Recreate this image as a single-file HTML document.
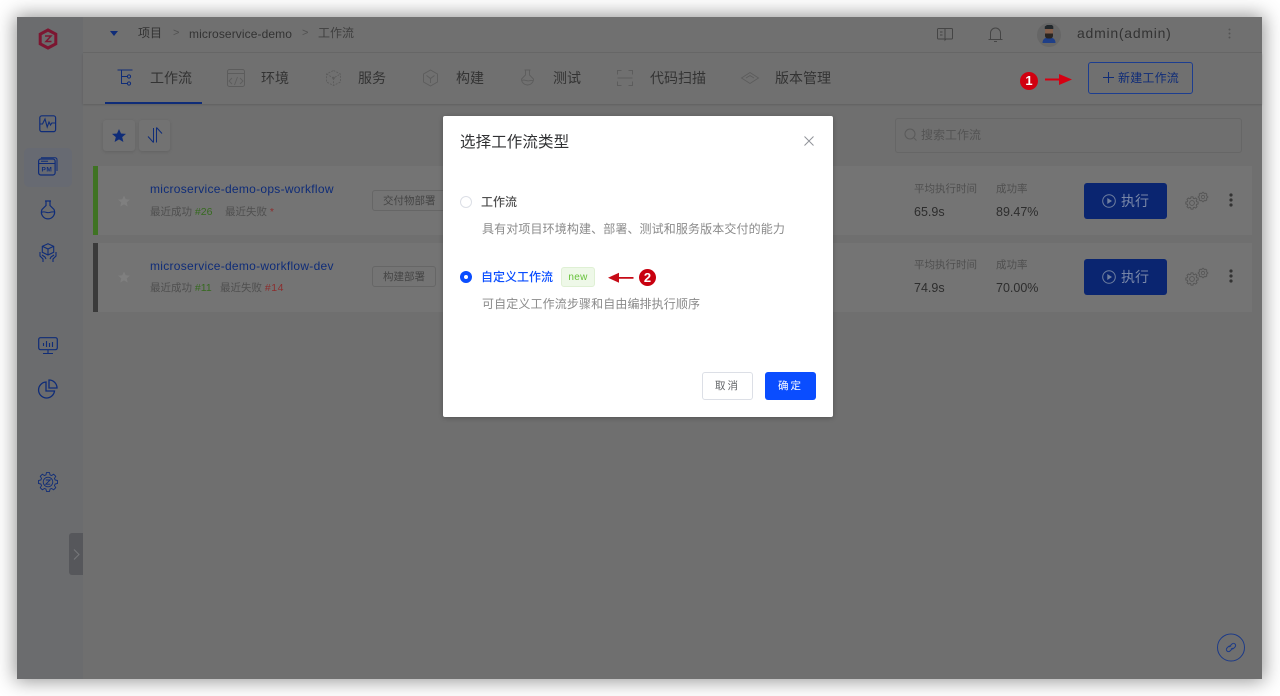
<!DOCTYPE html>
<html lang="zh">
<head>
<meta charset="utf-8">
<style>
html,body{margin:0;padding:0;width:1280px;height:696px;overflow:hidden;background:#fff;font-family:"Liberation Sans","Noto Sans CJK SC",sans-serif;}
#wrap{position:absolute;left:0;top:0;width:1280px;height:696px;filter:blur(.3px);}
.a{position:absolute;white-space:nowrap;line-height:1;}
#win{position:absolute;left:17px;top:17px;width:1245px;height:662px;background:#6f6f6f;box-shadow:0 0 18px 2px rgba(0,0,0,.42);overflow:hidden;}
svg{position:absolute;overflow:visible;fill:none;}
.row{position:absolute;height:69px;background:#747474;}
.bar{position:absolute;width:5px;height:69px;}
.tag{position:absolute;height:21px;border:1px solid #666;border-radius:3px;box-sizing:border-box;background:#747474;color:#454545;font-size:10.500px;line-height:20px;padding-left:10px;}
.run{position:absolute;width:83px;height:36px;background:#0a2570;border-radius:3px;}
</style>
</head>
<body>
<div id="wrap">
<div id="win"></div>
<div class="a" style="left:17px;top:17px;width:66px;height:662px;background:#6b6c6e;"></div>
<div class="a" style="left:83px;top:17px;width:1179px;height:35px;background:#707070;border-bottom:1px solid #686868;"></div>
<div class="a" style="left:83px;top:53px;width:1179px;height:51px;background:#707070;box-shadow:0 1px 2px rgba(0,0,0,.15);"></div>

<!-- sidebar -->
<svg style="left:38px;top:28px" width="20" height="22" viewBox="0 0 20 22"><path d="M10 2 17.800 6.200v9.600L10 20 2.200 15.800V6.200Z" stroke="#7c1631" stroke-width="3"/><path d="M7 8h6l-5 5.500h5.500" stroke="#7c1631" stroke-width="1.500"/></svg>
<svg style="left:39px;top:115px" width="18" height="18" viewBox="0 0 18 18"><rect x=".8" y=".8" width="15.800" height="15.800" rx="2" stroke="#0f2c78" stroke-width="1.200"/><path d="M1 9h2.500L6 4l2.200 8 1.800-5 1.500 3 1.300-2H17" stroke="#0f2c78" stroke-width="1.100"/></svg>
<div class="a" style="left:24px;top:148px;width:48px;height:39px;background:#676a72;border-radius:5px;"></div>
<svg style="left:38px;top:157px" width="20" height="20" viewBox="0 0 20 20"><rect x=".6" y="2" width="16.500" height="16" rx="2.200" stroke="#0f2c78" stroke-width="1.200"/><path d="M3 .7h14a2 2 0 0 1 2 2V14M1 6.500h16M3 4.300h7" stroke="#0f2c78" stroke-width="1"/><text x="3.500" y="14.500" font-size="6.500" font-weight="bold" letter-spacing=".5" fill="#0f2c78" font-family="Liberation Sans">PM</text></svg>
<svg style="left:40px;top:200px" width="16" height="20" viewBox="0 0 16 20"><path d="M5 1h6M6 1v4.500L2 9.500a6.600 6.600 0 1 0 12 0L10 5.500V1" stroke="#0f2c78" stroke-width="1.200"/><path d="M1.500 12.500c3-2 5 1 8 0 2-.6 3-.8 5-.5" stroke="#0f2c78" stroke-width="1"/></svg>
<svg style="left:39px;top:243px" width="18" height="20" viewBox="0 0 18 20"><path d="M9 .7l5.700 2.600v6L9 12 3.300 9.300v-6ZM3.300 3.300 9 6l5.700-2.700M9 6v6" stroke="#0f2c78" stroke-width="1.100"/><path d="M1 9v4l3 3v3M17 9v4l-3 3v3M3 12l3 2 1 2M15 12l-3 2-1 2" stroke="#0f2c78" stroke-width="1.100"/></svg>
<svg style="left:38px;top:337px" width="20" height="18" viewBox="0 0 20 18"><rect x=".7" y=".7" width="18.600" height="12" rx="1.800" stroke="#0f2c78" stroke-width="1.200"/><path d="M10 13v3M5 16.500h10M5.500 9V6M8.500 10V4M11.500 10V6M14.500 10V5" stroke="#0f2c78" stroke-width="1.100"/></svg>
<svg style="left:38px;top:379px" width="20" height="20" viewBox="0 0 20 20"><path d="M8 3a8 8 0 1 0 8.500 9H8Z" stroke="#0f2c78" stroke-width="1.300"/><path d="M11 1a8 8 0 0 1 8 8h-8Z" stroke="#0f2c78" stroke-width="1.300"/></svg>
<svg style="left:38px;top:472px" width="20" height="20" viewBox="0 0 20 20"><path d="M7.960 2.890 8.500.52H11.500L12.040 2.890 13.580 3.530 15.640 2.240 17.760 4.360 16.470 6.420 17.110 7.960 19.480 8.500V11.500L17.110 12.040 16.470 13.580 17.760 15.640 15.640 17.760 13.580 16.470 12.040 17.110 11.500 19.480H8.500L7.960 17.110 6.420 16.470 4.360 17.760 2.240 15.640 3.530 13.580 2.890 12.040.52 11.500V8.500L2.890 7.960 3.530 6.420 2.240 4.360 4.360 2.240 6.420 3.530Z" stroke="#0f2c78" stroke-width=".9"/><circle cx="10" cy="10" r="4.800" stroke="#0f2c78" stroke-width=".9"/><path d="M7.800 8h4.400l-4.400 4.200h4.400" stroke="#0f2c78" stroke-width=".9"/></svg>
<div class="a" style="left:69px;top:533px;width:14px;height:42px;background:#56575b;border-radius:3px 0 0 3px;"></div>
<svg style="left:73px;top:549px" width="7" height="11" viewBox="0 0 7 11"><path d="M1 .5 6 5.500 1 10.500" stroke="#77787b" stroke-width="1"/></svg>

<!-- top bar -->
<svg style="left:110px;top:31px" width="9" height="6" viewBox="0 0 9 6"><path d="M0 0h8L4 5Z" fill="#0f2c78"/></svg>
<div class="a" style="left:138px;top:27px;font-size:12px;color:#333;">项目</div>
<div class="a" style="left:173px;top:28px;font-size:11px;color:#505050;">&gt;</div>
<div class="a" style="left:189px;top:28px;font-size:12px;letter-spacing:.1px;color:#333;">microservice-demo</div>
<div class="a" style="left:302px;top:28px;font-size:11px;color:#505050;">&gt;</div>
<div class="a" style="left:318px;top:27px;font-size:12px;color:#3f3f3f;">工作流</div>
<svg style="left:937px;top:27px" width="16" height="14" viewBox="0 0 16 14"><path d="M8 1.500H1.500a1 1 0 0 0-1 1v8.500a1 1 0 0 0 1 1H8M8 1.500h6.500a1 1 0 0 1 1 1v8.500a1 1 0 0 1-1 1H9l-1 1V1.500ZM3 5h2.500M3 8h2.500" stroke="#454545" stroke-width="1"/></svg>
<svg style="left:988px;top:26px" width="15" height="16" viewBox="0 0 15 16"><path d="M.5 13.500h14M2.500 13.500V7a5 5 0 0 1 10 0v6.500M6 15.500h3" stroke="#454545" stroke-width="1"/></svg>
<div class="a" style="left:1037px;top:23px;width:24px;height:24px;border-radius:50%;background:#666;"></div>
<svg style="left:1041px;top:24px" width="16" height="20" viewBox="0 0 16 20"><path d="M1.500 19c0-4 2.500-5.500 6.500-5.500s6.500 1.500 6.500 5.500Z" fill="#1f3f88"/><rect x="4" y="3" width="8" height="10" rx="3" fill="#84604c"/><path d="M4 9.500h8v2.500a3 3 0 0 1-3 2.500H7a3 3 0 0 1-3-2.500Z" fill="#2a2522"/><path d="M3.800 5V2.500L6 1h5l1.300 1.500V5h-8.500Z" fill="#22282c"/></svg>
<div class="a" style="left:1077px;top:26px;font-size:14px;letter-spacing:.75px;color:#333;">admin(admin)</div>
<svg style="left:1228px;top:28px" width="3" height="11" viewBox="0 0 3 11"><circle cx="1.500" cy="1.500" r="1" fill="#545454"/><circle cx="1.500" cy="5.500" r="1" fill="#545454"/><circle cx="1.500" cy="9.500" r="1" fill="#545454"/></svg>

<!-- tabs -->
<svg style="left:117px;top:69px" width="16" height="17" viewBox="0 0 16 17"><path d="M.5 1h15M4.500 1v14M4.500 7.500h5.500M4.500 14.500h5.500" stroke="#0f2c78" stroke-width="1"/><circle cx="12" cy="7.500" r="1.600" stroke="#0f2c78"/><circle cx="12" cy="14.500" r="1.600" stroke="#0f2c78"/></svg>
<div class="a" style="left:150px;top:71px;font-size:14px;color:#333;">工作流</div>
<div class="a" style="left:105px;top:102px;width:97px;height:2px;background:#0f2c78;"></div>
<svg style="left:227px;top:69px" width="18" height="18" viewBox="0 0 18 18"><rect x=".5" y=".5" width="17" height="17" rx="2" stroke="#5c5c5c"/><path d="M.5 4.500h17M5 9l-3 3 3 3M13 9l3 3-3 3M10.500 8l-3 8" stroke="#5c5c5c" stroke-width=".9"/></svg>
<div class="a" style="left:261px;top:71px;font-size:14px;color:#333;">环境</div>
<svg style="left:325px;top:69px" width="17" height="18" viewBox="0 0 17 18"><path d="M8.500 1.500 15.500 5v8l-7 3.500-7-3.500V5ZM1.500 5l7 4 7-4M8.500 9v7.500" stroke="#5c5c5c" stroke-width=".9" stroke-dasharray="2 1.200"/><circle cx="8.500" cy="9" r="1.300" fill="#5c5c5c"/></svg>
<div class="a" style="left:358px;top:71px;font-size:14px;color:#333;">服务</div>
<svg style="left:423px;top:69px" width="15" height="18" viewBox="0 0 15 18"><path d="M7.500 1 14.500 5v8l-7 4-7-4V5ZM3.500 6.500 7.500 9.500l4-3M7.500 9.500V14" stroke="#5c5c5c" stroke-width=".9"/></svg>
<div class="a" style="left:456px;top:71px;font-size:14px;color:#333;">构建</div>
<svg style="left:520px;top:69px" width="15" height="18" viewBox="0 0 15 18"><path d="M4.500 1h6M5.500 1v5L1.500 10a5.500 5.500 0 1 0 12 0L9.500 6V1M1.500 11.500c3-1.500 5 1 7.500.3 2-.5 3-.5 4.500-.3" stroke="#5c5c5c" stroke-width=".9"/></svg>
<div class="a" style="left:553px;top:71px;font-size:14px;color:#333;">测试</div>
<svg style="left:617px;top:70px" width="16" height="16" viewBox="0 0 16 16"><path d="M.5 4.500v-4h4M11.500.5h4v4M15.500 11.500v4h-4M4.500 15.500h-4v-4M.5 8h15" stroke="#5c5c5c" stroke-width="1"/></svg>
<div class="a" style="left:650px;top:71px;font-size:14px;color:#333;">代码扫描</div>
<svg style="left:741px;top:72px" width="18" height="12" viewBox="0 0 18 12"><path d="M.5 6 9 .5 17.500 6 9 11.500ZM5 6l4-2.500L13 6" stroke="#5c5c5c" stroke-width=".9"/></svg>
<div class="a" style="left:775px;top:71px;font-size:14px;color:#333;">版本管理</div>

<!-- new button -->
<div class="a" style="left:1088px;top:62px;width:105px;height:32px;box-sizing:border-box;border:1px solid #1c3d90;border-radius:3px;"></div>
<svg style="left:1103px;top:72px" width="11" height="11" viewBox="0 0 11 11"><path d="M5.500 0v11M0 5.500h11" stroke="#0f2c78" stroke-width="1"/></svg>
<div class="a" style="left:1118px;top:72px;font-size:12px;letter-spacing:.2px;color:#0f2c78;">新建工作流</div>
<div class="a" style="left:1020px;top:72px;width:18px;height:18px;border-radius:50%;background:#d10010;color:#fff;font-size:13px;font-weight:bold;line-height:18px;text-align:center;">1</div>
<svg style="left:1045px;top:74px" width="28" height="12" viewBox="0 0 28 12"><path d="M0 4.500h14V0l13 5.500L14 11V6.500H0Z" fill="#d60012"/></svg>

<!-- toolbar -->
<div class="a" style="left:103px;top:120px;width:32px;height:31px;background:#727272;border-radius:3px;box-shadow:0 1px 3px rgba(0,0,0,.12);"></div>
<div class="a" style="left:139px;top:120px;width:31px;height:31px;background:#727272;border-radius:3px;box-shadow:0 1px 3px rgba(0,0,0,.12);"></div>
<svg style="left:112px;top:129px" width="14" height="13" viewBox="0 0 14 13"><path d="M7 0 9 4.500l5 .4-3.800 3.200 1.200 4.900L7 10.400 2.600 13l1.200-4.900L0 4.900l5-.4Z" fill="#0f2c78"/></svg>
<svg style="left:147px;top:127px" width="16" height="16" viewBox="0 0 16 16"><path d="M6.500 15.500V1M6.500 15.500 1 9.500M9.500.5v15M9.500.5l5.500 6" stroke="#0f2c78" stroke-width="1"/></svg>
<div class="a" style="left:895px;top:118px;width:347px;height:35px;box-sizing:border-box;border:1px solid #666;border-radius:3px;"></div>
<svg style="left:904px;top:128px" width="13" height="13" viewBox="0 0 13 13"><circle cx="6" cy="6" r="5" stroke="#5a5a5a"/><path d="M10 10l2.500 2.500" stroke="#5a5a5a"/></svg>
<div class="a" style="left:921px;top:129px;font-size:12px;color:#545454;">搜索工作流</div>

<!-- row 1 -->
<div class="row" style="left:98px;top:166px;width:1154px;"></div>
<div class="bar" style="left:93px;top:166px;background:#3f7323;"></div>
<svg style="left:118px;top:195px" width="12" height="12" viewBox="0 0 14 13"><path d="M7 0 9 4.500l5 .4-3.800 3.200 1.200 4.900L7 10.400 2.600 13l1.200-4.900L0 4.900l5-.4Z" fill="#7f7f7f"/></svg>
<div class="a" style="left:150px;top:183px;font-size:12px;letter-spacing:.28px;color:#0f2c78;">microservice-demo-ops-workflow</div>
<div class="a" style="left:150px;top:207px;font-size:10.500px;color:#4f4f4f;">最近成功 <span style="color:#366a1f">#26</span></div>
<div class="a" style="left:225px;top:207px;font-size:10.500px;color:#4f4f4f;">最近失败 <span style="color:#8c2d2d">*</span></div>
<div class="tag" style="left:372px;top:190px;width:80px;">交付物部署</div>
<div class="a" style="left:914px;top:184px;font-size:10.500px;color:#4f4f4f;">平均执行时间</div>
<div class="a" style="left:996px;top:184px;font-size:10.500px;color:#4f4f4f;">成功率</div>
<div class="a" style="left:914px;top:206px;font-size:12.500px;color:#2d2d2d;">65.9s</div>
<div class="a" style="left:996px;top:206px;font-size:12.500px;color:#2d2d2d;">89.47%</div>
<div class="run" style="left:1084px;top:183px;"></div>
<svg style="left:1102px;top:194px" width="14" height="14" viewBox="0 0 14 14"><circle cx="7" cy="7" r="6.300" stroke="#6f7f9f"/><path d="M5.300 4v6l4.700-3Z" fill="#6f7f9f"/></svg>
<div class="a" style="left:1121px;top:194px;font-size:14px;color:#7a88a8;">执行</div>
<svg style="left:1185px;top:192px" width="24" height="18" viewBox="0 0 24 18"><g stroke="#555"><path transform="translate(.5 4.500) scale(.65)" stroke-width="1.400" d="M7.960 2.890 8.500.52H11.500L12.040 2.890 13.580 3.530 15.640 2.240 17.760 4.360 16.470 6.420 17.110 7.960 19.480 8.500V11.500L17.110 12.040 16.470 13.580 17.760 15.640 15.640 17.760 13.580 16.470 12.040 17.110 11.500 19.480H8.500L7.960 17.110 6.420 16.470 4.360 17.760 2.240 15.640 3.530 13.580 2.890 12.040.52 11.500V8.500L2.890 7.960 3.530 6.420 2.240 4.360 4.360 2.240 6.420 3.530Z"/><circle cx="7" cy="11" r="2.400" stroke-width=".9"/><path transform="translate(13 0) scale(.5)" stroke-width="1.700" d="M7.960 2.890 8.500.52H11.500L12.040 2.890 13.580 3.530 15.640 2.240 17.760 4.360 16.470 6.420 17.110 7.960 19.480 8.500V11.500L17.110 12.040 16.470 13.580 17.760 15.640 15.640 17.760 13.580 16.470 12.040 17.110 11.500 19.480H8.500L7.960 17.110 6.420 16.470 4.360 17.760 2.240 15.640 3.530 13.580 2.890 12.040.52 11.500V8.500L2.890 7.960 3.530 6.420 2.240 4.360 4.360 2.240 6.420 3.530Z"/><circle cx="18" cy="5" r="1.700" stroke-width=".8"/></g></svg>
<svg style="left:1229px;top:193px" width="4" height="14" viewBox="0 0 4 14"><circle cx="2" cy="2" r="1.600" fill="#333"/><circle cx="2" cy="7" r="1.600" fill="#333"/><circle cx="2" cy="12" r="1.600" fill="#333"/></svg>

<!-- row 2 -->
<div class="row" style="left:98px;top:243px;width:1154px;"></div>
<div class="bar" style="left:93px;top:243px;background:#3a3a3a;"></div>
<svg style="left:118px;top:271px" width="12" height="12" viewBox="0 0 14 13"><path d="M7 0 9 4.500l5 .4-3.800 3.200 1.200 4.900L7 10.400 2.600 13l1.200-4.900L0 4.900l5-.4Z" fill="#7f7f7f"/></svg>
<div class="a" style="left:150px;top:260px;font-size:12px;letter-spacing:.28px;color:#0f2c78;">microservice-demo-workflow-dev</div>
<div class="a" style="left:150px;top:283px;font-size:10.500px;color:#4f4f4f;">最近成功 <span style="color:#366a1f">#11</span></div>
<div class="a" style="left:220px;top:283px;font-size:10.500px;color:#4f4f4f;">最近失败 <span style="color:#8c2d2d;letter-spacing:.5px">#14</span></div>
<div class="tag" style="left:372px;top:266px;width:64px;">构建部署</div>
<div class="a" style="left:914px;top:260px;font-size:10.500px;color:#4f4f4f;">平均执行时间</div>
<div class="a" style="left:996px;top:260px;font-size:10.500px;color:#4f4f4f;">成功率</div>
<div class="a" style="left:914px;top:282px;font-size:12.500px;color:#2d2d2d;">74.9s</div>
<div class="a" style="left:996px;top:282px;font-size:12.500px;color:#2d2d2d;">70.00%</div>
<div class="run" style="left:1084px;top:259px;"></div>
<svg style="left:1102px;top:270px" width="14" height="14" viewBox="0 0 14 14"><circle cx="7" cy="7" r="6.300" stroke="#6f7f9f"/><path d="M5.300 4v6l4.700-3Z" fill="#6f7f9f"/></svg>
<div class="a" style="left:1121px;top:270px;font-size:14px;color:#7a88a8;">执行</div>
<svg style="left:1185px;top:268px" width="24" height="18" viewBox="0 0 24 18"><g stroke="#555"><path transform="translate(.5 4.500) scale(.65)" stroke-width="1.400" d="M7.960 2.890 8.500.52H11.500L12.040 2.890 13.580 3.530 15.640 2.240 17.760 4.360 16.470 6.420 17.110 7.960 19.480 8.500V11.500L17.110 12.040 16.470 13.580 17.760 15.640 15.640 17.760 13.580 16.470 12.040 17.110 11.500 19.480H8.500L7.960 17.110 6.420 16.470 4.360 17.760 2.240 15.640 3.530 13.580 2.890 12.040.52 11.500V8.500L2.890 7.960 3.530 6.420 2.240 4.360 4.360 2.240 6.420 3.530Z"/><circle cx="7" cy="11" r="2.400" stroke-width=".9"/><path transform="translate(13 0) scale(.5)" stroke-width="1.700" d="M7.960 2.890 8.500.52H11.500L12.040 2.890 13.580 3.530 15.640 2.240 17.760 4.360 16.470 6.420 17.110 7.960 19.480 8.500V11.500L17.110 12.040 16.470 13.580 17.760 15.640 15.640 17.760 13.580 16.470 12.040 17.110 11.500 19.480H8.500L7.960 17.110 6.420 16.470 4.360 17.760 2.240 15.640 3.530 13.580 2.890 12.040.52 11.500V8.500L2.890 7.960 3.530 6.420 2.240 4.360 4.360 2.240 6.420 3.530Z"/><circle cx="18" cy="5" r="1.700" stroke-width=".8"/></g></svg>
<svg style="left:1229px;top:269px" width="4" height="14" viewBox="0 0 4 14"><circle cx="2" cy="2" r="1.600" fill="#333"/><circle cx="2" cy="7" r="1.600" fill="#333"/><circle cx="2" cy="12" r="1.600" fill="#333"/></svg>

<!-- help circle -->
<svg style="left:1217px;top:633px" width="29" height="29" viewBox="0 0 29 29"><circle cx="14" cy="14.500" r="13.500" stroke="#1c3a88" stroke-width="1"/><path d="M12 14l3-3a2 2 0 0 1 3 3l-1.500 1.500a2 2 0 0 1-2.500 0M16 15l-3 3a2 2 0 0 1-3-3l1.500-1.500a2 2 0 0 1 2.500 0" stroke="#1c3a88" stroke-width="1"/></svg>

<!-- modal -->
<div class="a" style="left:443px;top:116px;width:390px;height:301px;background:#fff;border-radius:2px;box-shadow:0 1px 5px rgba(0,0,0,.25);"></div>
<div class="a" style="left:460px;top:135px;font-size:15.500px;letter-spacing:.1px;color:#303133;">选择工作流类型</div>
<svg style="left:804px;top:135.500px" width="10" height="10" viewBox="0 0 10 10"><path d="M.5.500l9 9M9.500.500l-9 9" stroke="#909399" stroke-width="1"/></svg>
<div class="a" style="left:460px;top:196px;width:12px;height:12px;box-sizing:border-box;border:1px solid #dcdfe6;border-radius:50%;background:#fff;"></div>
<div class="a" style="left:481px;top:196px;font-size:12px;font-weight:500;color:#505050;">工作流</div>
<div class="a" style="left:482px;top:223px;font-size:12px;letter-spacing:.12px;color:#8a8a8a;">具有对项目环境构建、部署、测试和服务版本交付的能力</div>
<div class="a" style="left:460px;top:271px;width:12px;height:12px;border-radius:50%;background:#0a4dff;"></div>
<div class="a" style="left:464px;top:275px;width:4px;height:4px;border-radius:50%;background:#fff;"></div>
<div class="a" style="left:481px;top:271px;font-size:12px;font-weight:500;color:#0a4dff;">自定义工作流</div>
<div class="a" style="left:561px;top:267px;width:34px;height:20px;box-sizing:border-box;border:1px solid #dff0d4;border-radius:3px;background:#eef8e8;color:#67c23a;font-size:10px;letter-spacing:.3px;line-height:20px;text-align:center;">new</div>
<svg style="left:608px;top:272px" width="26" height="12" viewBox="0 0 26 12"><path d="M25.500 5H11V.800L0 5.800l11 5V6.800h14.500Z" fill="#c60b17"/></svg>
<div class="a" style="left:639px;top:269px;width:17px;height:17px;border-radius:50%;background:#c8000f;color:#fff;font-size:13px;font-weight:bold;line-height:17px;text-align:center;">2</div>
<div class="a" style="left:482px;top:298px;font-size:12px;letter-spacing:.12px;color:#8a8a8a;">可自定义工作流步骤和自由编排执行顺序</div>
<div class="a" style="left:702px;top:372px;width:51px;height:28px;box-sizing:border-box;border:1px solid #dcdfe6;border-radius:3px;background:#fff;color:#606266;font-size:10.500px;line-height:27px;text-align:center;letter-spacing:2px;">取消</div>
<div class="a" style="left:765px;top:372px;width:51px;height:28px;border-radius:3px;background:#0a4dff;color:#fff;font-size:10.500px;line-height:28px;text-align:center;letter-spacing:2px;">确定</div>
</div>
</body>
</html>
